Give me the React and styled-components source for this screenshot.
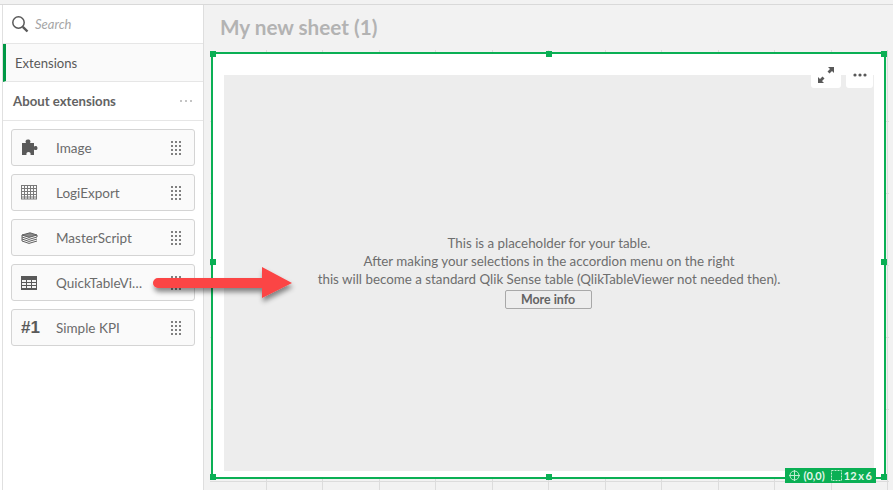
import styled, { createGlobalStyle } from 'styled-components'

const Global = createGlobalStyle`
  html, body {
    margin: 0;
    padding: 0;
    background: #fff;
  }
  body {
    font-family: "Lato", "Noto Sans", sans-serif;
    color: #595959;
  }
`

const Page = styled.div`
  position: relative;
  width: 893px;
  height: 490px;
  overflow: hidden;
  background: #f2f2f2;
  padding-top: 4px;
  box-sizing: border-box;
`

const Shell = styled.div`
  display: flex;
  height: 486px;
  border-top: 1px solid #d9d9d9;
  box-sizing: border-box;
`

const Gutter = styled.div`
  width: 2px;
  background: #fff;
  border-right: 1px solid #e0e0e0;
`

const Sidebar = styled.aside`
  width: 200px;
  background: #fff;
  border-right: 1px solid #dedede;
  display: flex;
  flex-direction: column;
`

const SearchRow = styled.div`
  height: 38px;
  display: flex;
  align-items: center;
  gap: 6px;
  padding-left: 8px;
  border-bottom: 1px solid #e6e6e6;
`

const SearchText = styled.span`
  font-size: 13px;
  font-style: italic;
  color: #a6a6a6;
`

const TabRow = styled.div`
  height: 37px;
  display: flex;
  align-items: center;
  padding-left: 9px;
  background: #fafafa;
  border-left: 3px solid #009845;
  border-bottom: 1px solid #e6e6e6;
  font-size: 13.1px;
  color: #595959;
`

const SectionRow = styled.div`
  height: 38px;
  display: flex;
  align-items: center;
  justify-content: space-between;
  padding: 0 11px 0 10px;
  border-bottom: 1px solid #e6e6e6;
  font-size: 13.2px;
  font-weight: 700;
  color: #636363;
`

const List = styled.div`
  display: flex;
  flex-direction: column;
  gap: 8px;
  padding: 8px 8px 0;
`

const Card = styled.div`
  height: 37px;
  box-sizing: border-box;
  display: flex;
  align-items: center;
  background: #fafafa;
  border: 1px solid #d4d4d4;
  border-radius: 3px;
  padding: 0 13px 0 9px;
  font-size: 13.5px;
  color: #6b6b6b;
`

const IconSlot = styled.div`
  width: 35px;
  flex: none;
  display: flex;
  align-items: center;
  color: #595959;
`

const Rank = styled.span`
  font-family: "Liberation Sans", sans-serif;
  font-size: 17px;
  font-weight: 700;
  color: #595959;
`

const CardLabel = styled.span`
  flex: 1;
  min-width: 0;
  overflow: hidden;
  white-space: nowrap;
  text-overflow: ellipsis;
  padding-right: 22px;
`

const Main = styled.main`
  flex: 1;
  min-width: 0;
  display: flex;
  flex-direction: column;
`

const Title = styled.h1`
  margin: 0;
  height: 45px;
  box-sizing: border-box;
  padding: 0 0 1px 16px;
  display: flex;
  align-items: center;
  font-size: 20.7px;
  font-weight: 700;
  color: #b3b3b3;
`

const GridArea = styled.div`
  flex: 1;
  margin-left: 6px;
  padding: 2px 3px 0 1px;
  width: 679px;
  box-sizing: border-box;
  background-image:
    repeating-linear-gradient(
      to right,
      transparent 0 56px,
      #dcdcdc 56px 57px,
      transparent 57px 112px,
      #dcdcdc 112px 113px
    ),
    repeating-linear-gradient(to bottom, transparent 0 71px, #dcdcdc 71px 72px);
`

const Frame = styled.section`
  position: relative;
  height: 427px;
  box-sizing: border-box;
  border: 2px solid #0aaf54;
  background: #fff;
  padding: 21px 10px 6px 11px;
  display: flex;
`

const Handle = styled.span`
  position: absolute;
  width: 6px;
  height: 6px;
  background: #0aaf54;
  ${p => (p.$h === 'center' ? 'left: calc(50% - 2.5px);' : `${p.$h}: -3px;`)}
  ${p => (p.$v === 'middle' ? 'top: 205px;' : `${p.$v}: -3px;`)}
`

const Placeholder = styled.div`
  flex: 1;
  background: #ededed;
  display: flex;
  flex-direction: column;
  align-items: center;
  justify-content: center;
  font-size: 13.35px;
  line-height: 18px;
  color: #6e6e6e;
  text-align: center;
  padding-bottom: 3px;
`

const InfoButton = styled.button`
  width: 87px;
  height: 19px;
  margin: 2px 2px 0 0;
  padding: 0;
  background: transparent;
  border: 1px solid #a8a8a8;
  border-radius: 2px;
  font-family: inherit;
  font-size: 12.4px;
  font-weight: 700;
  line-height: 16px;
  color: #636363;
`

const Tools = styled.div`
  position: absolute;
  top: 8px;
  right: 11px;
  display: flex;
  gap: 5px;
`

const Tool = styled.div`
  width: ${p => p.$w}px;
  height: 26px;
  background: #fff;
  border-radius: 0 0 3px 3px;
  display: flex;
  align-items: center;
  justify-content: center;
`

const Badge = styled.div`
  position: absolute;
  right: 8px;
  bottom: -6px;
  height: 15px;
  padding: 0 4px;
  background: #0aaf54;
  color: #e3f7eb;
  display: flex;
  align-items: center;
  gap: 3px;
  font-size: 11px;
  font-weight: 700;
  white-space: nowrap;
  word-spacing: -1px;
`

const SizeIcon = styled.svg`
  margin-left: 3px;
  margin-right: -1px;
`

const Arrow = styled.svg`
  position: absolute;
  left: 148px;
  top: 262px;
  overflow: visible;
`

const DragDots = () => (
  <svg width="10" height="14" viewBox="0 0 10 14" fill="#808080">
    {[0, 4, 8].map(x =>
      [0, 4, 8, 12].map(y => <rect key={`${x}-${y}`} x={x} y={y} width="2" height="2" />)
    )}
  </svg>
)

const PuzzleIcon = () => (
  <svg width="17" height="17" viewBox="0 0 17 17" fill="#595959">
    <path d="M1 4H5C4 2.5 4.5.5 7 .5S10 2.5 9 4H13V7.5C14 6.5 16.5 6.5 16.5 9S14 11.5 13 10.5V16H9.5C10 14 9 13 7.5 13S5 14 5.5 16H1Z" />
  </svg>
)

const GridIcon = () => (
  <svg width="17" height="15" viewBox="0 0 17 15" fill="none" stroke="#7a7a7a">
    <rect x="0.5" y="0.5" width="15" height="13.5" />
    {[3.5, 6.5, 9.5, 12.5].map(x => <path key={x} d={`M${x} 0V14`} />)}
    {[3.5, 6.5, 9.5, 12].map(y => <path key={y} d={`M0 ${y}H16`} />)}
  </svg>
)

const CalendarIcon = () => (
  <svg width="16" height="14" viewBox="0 0 16 14">
    <rect width="16" height="14" fill="#595959" />
    {[1, 6, 11].map(x =>
      [4, 7, 10].map(y => <rect key={`${x}-${y}`} x={x} y={y} width="4" height="2" fill="#f4f4f4" />)
    )}
  </svg>
)

const StackIcon = () => (
  <svg width="17" height="12" viewBox="0 0 17 12" fill="none" stroke="#5f5f5f">
    <path d="M1 3 9 .8 16 3 8 5.4Z" fill="#8a8a8a" />
    <path d="M1 3V5L8 7.4 16 5V3" />
    <path d="M1 5V7L8 9.4 16 7" />
    <path d="M1 7V9L8 11.4 16 9" />
  </svg>
)

const items = [
  { name: 'Image', icon: <PuzzleIcon /> },
  { name: 'LogiExport', icon: <GridIcon /> },
  { name: 'MasterScript', icon: <StackIcon /> },
  { name: 'QuickTableViewer', icon: <CalendarIcon /> },
  { name: 'Simple KPI', icon: <Rank>#1</Rank> },
]

const handles = [
  ['left', 'top'],
  ['center', 'top'],
  ['right', 'top'],
  ['left', 'middle'],
  ['right', 'middle'],
  ['left', 'bottom'],
  ['center', 'bottom'],
  ['right', 'bottom'],
]

export default function App() {
  return (
    <Page>
      <Global />
      <Shell>
        <Gutter />
        <Sidebar>
          <SearchRow>
            <svg width="18" height="18" viewBox="0 0 18 18" fill="none" stroke="#595959">
              <circle cx="7.5" cy="7.5" r="5.7" strokeWidth="1.5" />
              <path d="M11.8 11.8 16.5 16.5" strokeWidth="2.4" />
            </svg>
            <SearchText>Search</SearchText>
          </SearchRow>
          <TabRow>Extensions</TabRow>
          <SectionRow>
            About extensions
            <svg width="12" height="2" viewBox="0 0 12 2" fill="#c4c4c4">
              <rect x="0" width="2" height="2" />
              <rect x="5" width="2" height="2" />
              <rect x="10" width="2" height="2" />
            </svg>
          </SectionRow>
          <List>
            {items.map(item => (
              <Card key={item.name}>
                <IconSlot>{item.icon}</IconSlot>
                <CardLabel>{item.name}</CardLabel>
                <DragDots />
              </Card>
            ))}
          </List>
        </Sidebar>
        <Main>
          <Title>My new sheet (1)</Title>
          <GridArea>
            <Frame>
              {handles.map(([h, v]) => <Handle key={h + v} $h={h} $v={v} />)}
              <Placeholder>
                <div>This is a placeholder for your table.</div>
                <div>After making your selections in the accordion menu on the right</div>
                <div>this will become a standard Qlik Sense table (QlikTableViewer not needed then).</div>
                <InfoButton>More info</InfoButton>
              </Placeholder>
              <Tools>
                <Tool $w={30}>
                  <svg width="16" height="16" viewBox="0 0 16 16" fill="#595959">
                    <path d="M10 0H16V6L14 4 11.5 6.5 9.5 4.5 12 2Z" />
                    <path d="M6 16H0V10L2 12 4.5 9.5 6.5 11.5 4 14Z" />
                  </svg>
                </Tool>
                <Tool $w={27}>
                  <svg width="14" height="4" viewBox="0 0 14 4" fill="#595959">
                    <circle cx="2" cy="2" r="1.6" />
                    <circle cx="7" cy="2" r="1.6" />
                    <circle cx="12" cy="2" r="1.6" />
                  </svg>
                </Tool>
              </Tools>
              <Badge>
                <svg width="11" height="11" viewBox="0 0 11 11" fill="none" stroke="#bfeccf">
                  <circle cx="5.5" cy="5.5" r="4.5" />
                  <path d="M5.5 0v11M0 5.5h11" />
                </svg>
                (0,0)
                <SizeIcon width="11" height="11" viewBox="0 0 11 11" fill="none" stroke="#bfeccf" strokeDasharray="2 1">
                  <rect x="0.5" y="0.5" width="10" height="10" />
                </SizeIcon>
                12 x 6
              </Badge>
            </Frame>
          </GridArea>
        </Main>
      </Shell>
      <Arrow width="145" height="40" viewBox="0 0 145 40">
        <defs>
          <filter id="arrowShadow" x="-10%" y="-30%" width="120%" height="180%">
            <feDropShadow dx="1" dy="4" stdDeviation="2.5" floodColor="#000" floodOpacity="0.45" />
          </filter>
        </defs>
        <path
          d="M10 16H114V5L144 21 114 36V26H10a5 5 0 0 1 0-10z"
          fill="#fb4444"
          filter="url(#arrowShadow)"
        />
      </Arrow>
    </Page>
  )
}
